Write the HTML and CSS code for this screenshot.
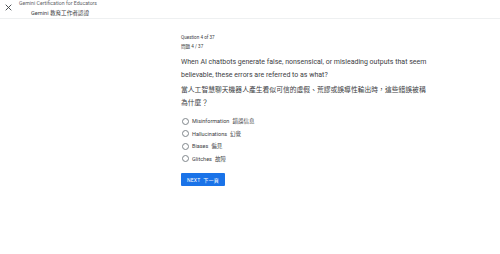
FILE: index.html
```html
<!DOCTYPE html>
<html lang="en">
<head>
    <meta charset="UTF-8">
    <meta name="viewport" content="width=device-width, initial-scale=1.0">
    <title>Gemini Certification for Educators</title>
    <link rel="stylesheet" href="styles.css">
</head>
<body>
    <header class="top-bar">
        <button class="close-btn" aria-label="Close">
            <svg width="7" height="7" viewBox="0 0 10 10">
                <path d="M1 1L9 9M9 1L1 9" stroke="#3c4043" stroke-width="1.3" fill="none"/>
            </svg>
        </button>
        <div class="titles">
            <div class="title-en">Gemini Certification for Educators</div>
            <div class="title-zh">Gemini 教育工作者認證</div>
        </div>
    </header>

    <main class="quiz">
        <div class="progress">
            <div>Question 4 of 37</div>
            <div>問題 4 / 37</div>
        </div>
        <p class="question">When AI chatbots generate false, nonsensical, or misleading outputs that seem believable, these errors are referred to as what?</p>
        <p class="question zh">當人工智慧聊天機器人產生看似可信的虛假、荒謬或誤導性輸出時，這些錯誤被稱為什麼？</p>

        <div class="options">
            <label class="option"><span class="radio"></span>Misinformation<span class="zh-label">錯誤信息</span></label>
            <label class="option"><span class="radio"></span>Hallucinations<span class="zh-label">幻覺</span></label>
            <label class="option"><span class="radio"></span>Biases<span class="zh-label">偏見</span></label>
            <label class="option"><span class="radio"></span>Glitches<span class="zh-label">故障</span></label>
        </div>

        <button class="next-btn">NEXT<span class="zh-label">下一頁</span></button>
    </main>
</body>
</html>
```

FILE: styles.css
```css
body {
    font-family: Roboto, "Noto Sans CJK TC", sans-serif;
    background-color: #fff;
    color: #3c4043;
    margin: 0;
}

.top-bar {
    display: flex;
    align-items: flex-start;
    height: 18px;
    border-bottom: 1px solid #eef0f1;
}

.close-btn {
    background: none;
    border: none;
    padding: 0;
    margin: 4px 0 0 5px;
    width: 8px;
    height: 8px;
    display: flex;
    cursor: pointer;
}

.titles {
    margin-left: 6px;
    color: #5f6368;
    font-size: 5.2px;
    line-height: 5px;
}

.title-en {
    margin-top: 1px;
}

.title-zh {
    margin-top: 5px;
    margin-left: 12px;
    font-size: 5.6px;
    color: #3c4043;
}

.quiz {
    margin-left: 181px;
    width: 250px;
    padding-top: 14px;
}

.progress {
    font-size: 4.6px;
    line-height: 9px;
    color: #3c4043;
}

.question {
    font-size: 7px;
    line-height: 13px;
    margin: 5px 0 0;
    color: #3c4043;
}

.question.zh {
    margin-top: 2px;
    font-size: 6.8px;
    line-height: 12.5px;
}

.options {
    margin-top: 6px;
}

.option {
    display: flex;
    align-items: center;
    height: 12.5px;
    font-size: 5.5px;
    color: #3c4043;
}

.zh-label {
    margin-left: 3px;
}

.radio {
    width: 5px;
    height: 5px;
    border: 0.7px solid #80868b;
    border-radius: 50%;
    margin-right: 3px;
    margin-left: 1px;
}

.next-btn {
    margin-top: 8px;
    width: 44px;
    height: 13px;
    padding: 0;
    border: none;
    border-radius: 1px;
    background-color: #1a73e8;
    color: #fff;
    font-family: inherit;
    font-size: 5px;
    letter-spacing: 0.2px;
    cursor: pointer;
}
```
